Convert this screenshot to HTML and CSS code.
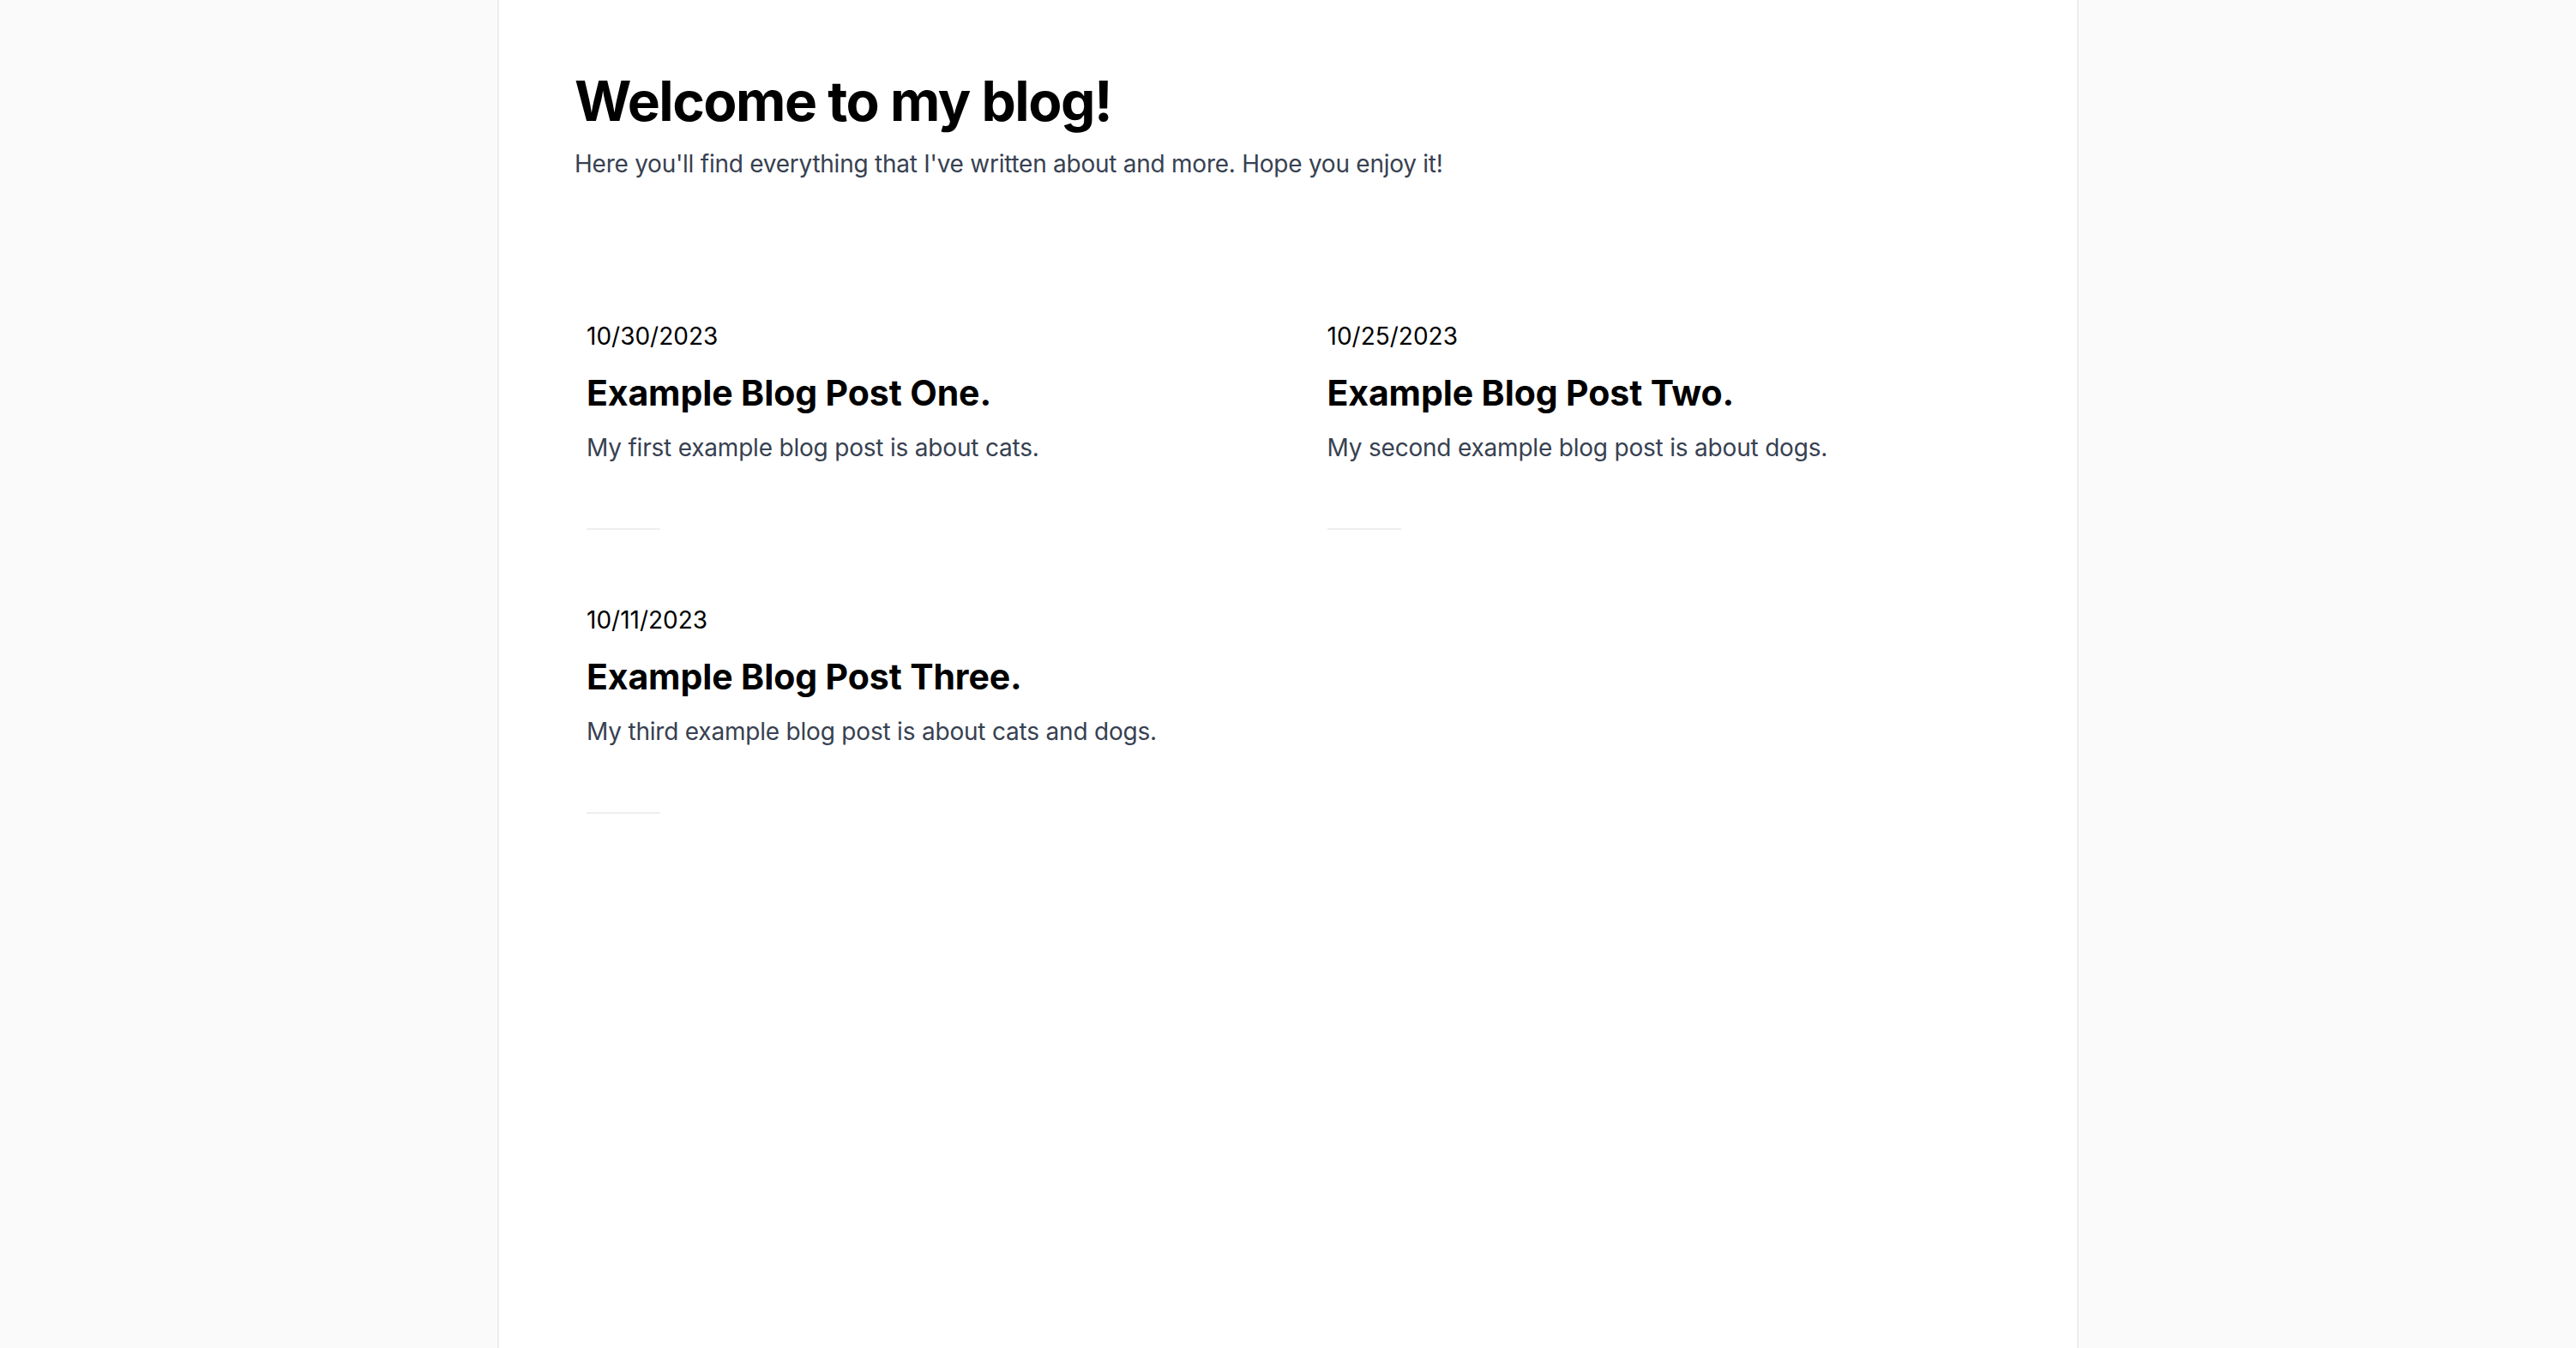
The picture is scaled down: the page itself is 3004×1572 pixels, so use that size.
FILE: index.html
```html
<!DOCTYPE html>
<html lang="en">
<head>
<meta charset="utf-8">
<title>My Blog</title>
<link rel="stylesheet" href="styles.css">
</head>
<body>
<main class="container">
  <header class="intro">
    <h1 class="intro-title">Welcome to my blog!</h1>
    <p class="intro-text">Here you'll find everything that I've written about and more. Hope you enjoy it!</p>
  </header>
  <section class="posts">
    <article class="post">
      <div class="post-date">10/30/2023</div>
      <h2 class="post-title">Example Blog Post One.</h2>
      <p class="post-desc">My first example blog post is about cats.</p>
      <hr class="post-rule">
    </article>
    <article class="post">
      <div class="post-date">10/25/2023</div>
      <h2 class="post-title">Example Blog Post Two.</h2>
      <p class="post-desc">My second example blog post is about dogs.</p>
      <hr class="post-rule">
    </article>
    <article class="post">
      <div class="post-date">10/11/2023</div>
      <h2 class="post-title">Example Blog Post Three.</h2>
      <p class="post-desc">My third example blog post is about cats and dogs.</p>
      <hr class="post-rule">
    </article>
  </section>
</main>
</body>
</html>
```
FILE: styles.css
```css
* { box-sizing: border-box; }
html, body { margin: 0; padding: 0; }
body {
  background: #fafafa;
  font-family: Inter, "Noto Sans", "Liberation Sans", sans-serif;
  color: #000;
}
.container {
  width: 1844px;
  min-height: 1572px;
  margin: 0 auto;
  background: #fff;
  border-left: 2px solid #eeeeee;
  border-right: 2px solid #eeeeee;
  padding: 78px 88px 80px 88px;
}
.intro-title {
  margin: 0;
  font-size: 64px;
  line-height: 80px;
  font-weight: 700;
  letter-spacing: -1.5px;
}
.intro-text {
  margin: 13px 0 0 0;
  font-size: 28px;
  line-height: 40px;
  color: #374151;
  letter-spacing: -0.25px;
}
.posts {
  display: grid;
  grid-template-columns: 1fr 1fr;
  column-gap: 63px;
  row-gap: 85px;
  margin-top: 161px;
}
.post {
  padding: 0 14px;
}
.post-date {
  font-size: 28px;
  line-height: 40px;
}
.post-title {
  margin: 18px 0 0 0;
  font-size: 41px;
  line-height: 56px;
  font-weight: 700;
  letter-spacing: -0.1px;
}
.post-desc {
  margin: 16px 0 0 0;
  font-size: 28px;
  line-height: 40px;
  color: #374151;
  letter-spacing: -0.2px;
}
.post-rule {
  width: 86px;
  margin: 74px 0 0 0;
  border: 0;
  border-top: 2px solid #eeeeee;
}
```
